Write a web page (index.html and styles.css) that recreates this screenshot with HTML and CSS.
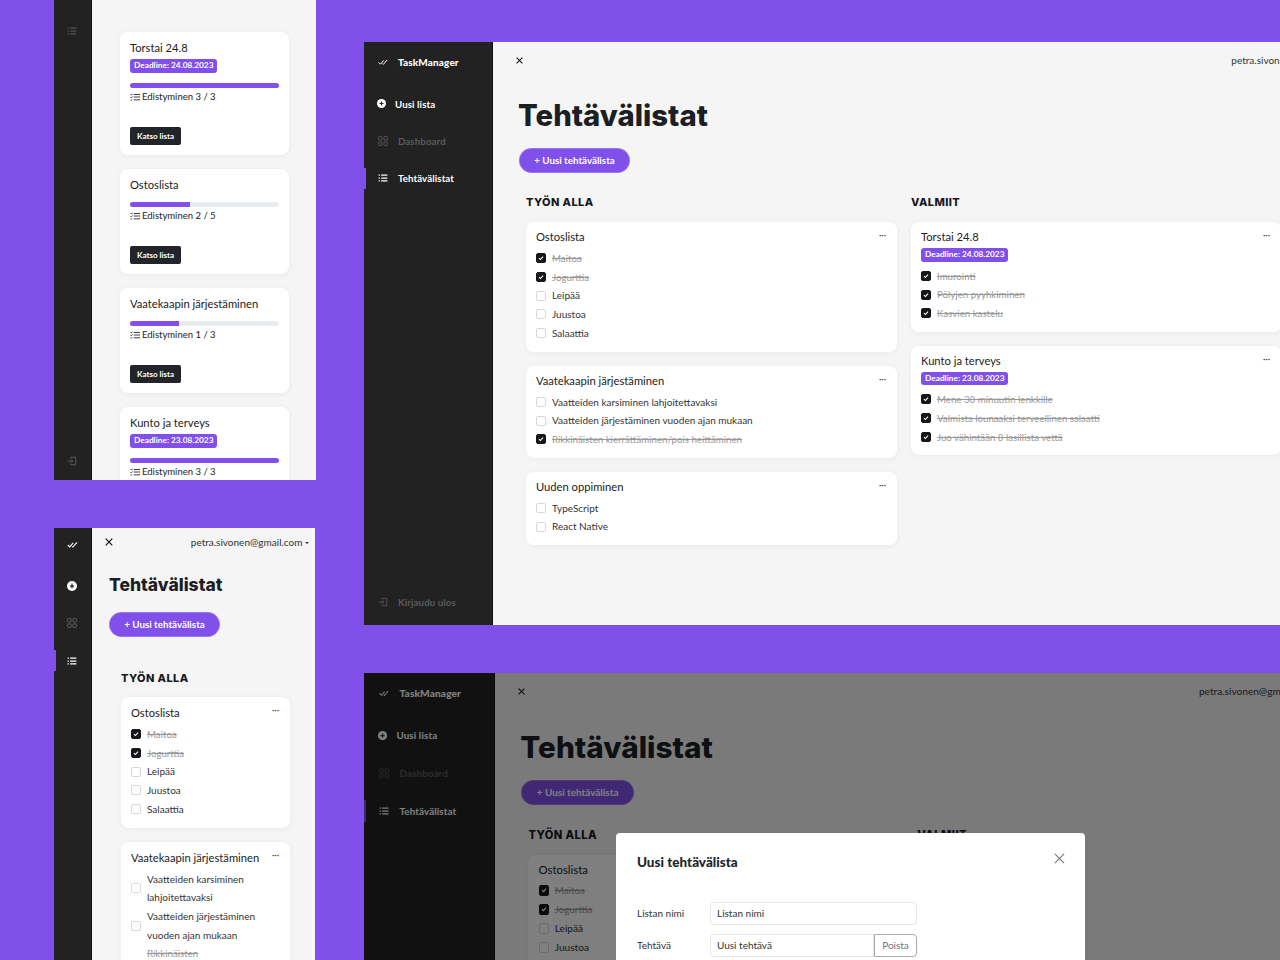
FILE: index.html
```html
<!DOCTYPE html>
<html lang="en">
<head>
    <meta charset="UTF-8">
    <title>TaskManager</title>
    <link rel="stylesheet" href="styles.css">
</head>
<body>
    <svg class="icon-defs" width="0" height="0">
        <symbol id="i-check" viewBox="0 0 16 16"><path d="M1 8.5l3 3 5-6M7.5 11l1 .8 6-7" fill="none" stroke="currentColor" stroke-width="1.6"/></symbol>
        <symbol id="i-plus" viewBox="0 0 16 16"><circle cx="8" cy="8" r="8" fill="currentColor"/><path d="M8 4.5v7M4.5 8h7" stroke="#222" stroke-width="2"/></symbol>
        <symbol id="i-grid" viewBox="0 0 16 16"><g fill="none" stroke="currentColor" stroke-width="1.4"><rect x="1" y="1" width="5.5" height="5.5" rx="1"/><rect x="9.5" y="1" width="5.5" height="5.5" rx="1"/><rect x="1" y="9.5" width="5.5" height="5.5" rx="1"/><rect x="9.5" y="9.5" width="5.5" height="5.5" rx="1"/></g></symbol>
        <symbol id="i-list" viewBox="0 0 16 16"><path d="M5 3.5h10M5 8h10M5 12.5h10" stroke="currentColor" stroke-width="2"/><path d="M1 3.5h2M1 8h2M1 12.5h2" stroke="currentColor" stroke-width="2"/></symbol>
        <symbol id="i-logout" viewBox="0 0 16 16"><path d="M6 4V2h8v12H6v-2M1 8h8M6.5 5.5L9 8l-2.5 2.500" fill="none" stroke="currentColor" stroke-width="1.3"/></symbol>
        <symbol id="i-tasks" viewBox="0 0 16 12"><path d="M1 2l1 1 2-2.3M1 6.5l1 1 2-2.3M1 10.800h2.500M6 2h10M6 6h10M6 10.500h10" fill="none" stroke="currentColor" stroke-width="1.4"/></symbol>
        <symbol id="i-box" viewBox="0 0 11 11"><path d="M2.700 5.600l2 2 3.600-4" fill="none" stroke="#fff" stroke-width="1.5"/></symbol>
        <symbol id="i-close" viewBox="0 0 8 8"><path d="M.7 .7l6.600 6.600M7.300 .7L.7 7.300" stroke="currentColor" stroke-width="1.2"/></symbol>
    </svg>

    <!-- mobile, progress cards -->
    <section class="window win-mobile-a">
        <nav class="rail">
            <svg class="rail-icon rail-list"><use href="#i-list"/></svg>
            <svg class="rail-icon rail-out"><use href="#i-logout"/></svg>
        </nav>
        <div class="stack">
            <div class="card summary">
                <h4>Torstai 24.8</h4>
                <span class="badge">Deadline: 24.08.2023</span>
                <div class="bar"><div class="bar-fill" style="width:100%"></div></div>
                <p class="progress-text"><svg><use href="#i-tasks"/></svg>Edistyminen 3 / 3</p>
                <a class="btn-dark">Katso lista</a>
            </div>
            <div class="card summary">
                <h4>Ostoslista</h4>
                <div class="bar"><div class="bar-fill" style="width:40%"></div></div>
                <p class="progress-text"><svg><use href="#i-tasks"/></svg>Edistyminen 2 / 5</p>
                <a class="btn-dark">Katso lista</a>
            </div>
            <div class="card summary">
                <h4>Vaatekaapin järjestäminen</h4>
                <div class="bar"><div class="bar-fill" style="width:33%"></div></div>
                <p class="progress-text"><svg><use href="#i-tasks"/></svg>Edistyminen 1 / 3</p>
                <a class="btn-dark">Katso lista</a>
            </div>
            <div class="card summary">
                <h4>Kunto ja terveys</h4>
                <span class="badge">Deadline: 23.08.2023</span>
                <div class="bar"><div class="bar-fill" style="width:100%"></div></div>
                <p class="progress-text"><svg><use href="#i-tasks"/></svg>Edistyminen 3 / 3</p>
            </div>
        </div>
    </section>

    <!-- desktop -->
    <section class="window win-desktop">
        <nav class="sidebar">
            <div class="brand"><svg><use href="#i-check"/></svg>TaskManager</div>
            <a class="side-link new"><svg><use href="#i-plus"/></svg>Uusi lista</a>
            <a class="side-link muted"><svg><use href="#i-grid"/></svg>Dashboard</a>
            <a class="side-link active"><svg><use href="#i-list"/></svg>Tehtävälistat</a>
            <a class="side-link muted logout"><svg><use href="#i-logout"/></svg>Kirjaudu ulos</a>
        </nav>
        <main class="content">
            <div class="topbar"><svg class="close"><use href="#i-close"/></svg><span class="user">petra.sivonen@gmail.com</span></div>
            <h1>Tehtävälistat</h1>
            <a class="btn-new">+ Uusi tehtävälista</a>
            <div class="columns">
                <div class="column">
                    <h3>TYÖN ALLA</h3>
                    <div class="card todo">
                        <span class="dots">•••</span>
                        <h4>Ostoslista</h4>
                        <ul>
                            <li class="done"><i class="box"><svg><use href="#i-box"/></svg></i>Maitoa</li>
                            <li class="done"><i class="box"><svg><use href="#i-box"/></svg></i>Jogurttia</li>
                            <li><i class="box"></i>Leipää</li>
                            <li><i class="box"></i>Juustoa</li>
                            <li><i class="box"></i>Salaattia</li>
                        </ul>
                    </div>
                    <div class="card todo">
                        <span class="dots">•••</span>
                        <h4>Vaatekaapin järjestäminen</h4>
                        <ul>
                            <li><i class="box"></i>Vaatteiden karsiminen lahjoitettavaksi</li>
                            <li><i class="box"></i>Vaatteiden järjestäminen vuoden ajan mukaan</li>
                            <li class="done"><i class="box"><svg><use href="#i-box"/></svg></i>Rikkinäisten kierrättäminen/pois heittäminen</li>
                        </ul>
                    </div>
                    <div class="card todo">
                        <span class="dots">•••</span>
                        <h4>Uuden oppiminen</h4>
                        <ul>
                            <li><i class="box"></i>TypeScript</li>
                            <li><i class="box"></i>React Native</li>
                        </ul>
                    </div>
                </div>
                <div class="column">
                    <h3>VALMIIT</h3>
                    <div class="card todo">
                        <span class="dots">•••</span>
                        <h4>Torstai 24.8</h4>
                        <span class="badge">Deadline: 24.08.2023</span>
                        <ul>
                            <li class="done"><i class="box"><svg><use href="#i-box"/></svg></i>Imurointi</li>
                            <li class="done"><i class="box"><svg><use href="#i-box"/></svg></i>Pölyjen pyyhkiminen</li>
                            <li class="done"><i class="box"><svg><use href="#i-box"/></svg></i>Kasvien kastelu</li>
                        </ul>
                    </div>
                    <div class="card todo">
                        <span class="dots">•••</span>
                        <h4>Kunto ja terveys</h4>
                        <span class="badge">Deadline: 23.08.2023</span>
                        <ul>
                            <li class="done"><i class="box"><svg><use href="#i-box"/></svg></i>Mene 30 minuutin lenkkille</li>
                            <li class="done"><i class="box"><svg><use href="#i-box"/></svg></i>Valmista lounaaksi terveellinen salaatti</li>
                            <li class="done"><i class="box"><svg><use href="#i-box"/></svg></i>Juo vähintään 8 lasillista vettä</li>
                        </ul>
                    </div>
                </div>
            </div>
        </main>
    </section>

    <!-- mobile, checklists -->
    <section class="window win-mobile-b">
        <nav class="rail">
            <svg class="rail-icon rail-brand"><use href="#i-check"/></svg>
            <svg class="rail-icon rail-plus"><use href="#i-plus"/></svg>
            <svg class="rail-icon rail-grid"><use href="#i-grid"/></svg>
            <svg class="rail-icon rail-active"><use href="#i-list"/></svg>
        </nav>
        <main class="content">
            <div class="topbar"><svg class="close"><use href="#i-close"/></svg><span class="user">petra.sivonen@gmail.com <b class="caret"></b></span></div>
            <h1>Tehtävälistat</h1>
            <a class="btn-new">+ Uusi tehtävälista</a>
            <div class="column">
                <h3>TYÖN ALLA</h3>
                <div class="card todo">
                    <span class="dots">•••</span>
                    <h4>Ostoslista</h4>
                    <ul>
                        <li class="done"><i class="box"><svg><use href="#i-box"/></svg></i>Maitoa</li>
                        <li class="done"><i class="box"><svg><use href="#i-box"/></svg></i>Jogurttia</li>
                        <li><i class="box"></i>Leipää</li>
                        <li><i class="box"></i>Juustoa</li>
                        <li><i class="box"></i>Salaattia</li>
                    </ul>
                </div>
                <div class="card todo">
                    <span class="dots">•••</span>
                    <h4>Vaatekaapin järjestäminen</h4>
                    <ul>
                        <li><i class="box"></i>Vaatteiden karsiminen lahjoitettavaksi</li>
                        <li><i class="box"></i>Vaatteiden järjestäminen vuoden ajan mukaan</li>
                        <li class="done"><i class="box"><svg><use href="#i-box"/></svg></i><span>Rikkinäisten<br>kierrättäminen/pois heittäminen</span></li>
                    </ul>
                </div>
            </div>
        </main>
    </section>

    <!-- desktop with modal open -->
    <section class="window win-modal">
        <div class="scaled">
            <nav class="sidebar">
                <div class="brand"><svg><use href="#i-check"/></svg>TaskManager</div>
                <a class="side-link new"><svg><use href="#i-plus"/></svg>Uusi lista</a>
                <a class="side-link muted"><svg><use href="#i-grid"/></svg>Dashboard</a>
                <a class="side-link active"><svg><use href="#i-list"/></svg>Tehtävälistat</a>
            </nav>
            <main class="content">
                <div class="topbar"><svg class="close"><use href="#i-close"/></svg><span class="user">petra.sivonen@gmail.com</span></div>
                <h1>Tehtävälistat</h1>
                <a class="btn-new">+ Uusi tehtävälista</a>
                <div class="columns">
                    <div class="column">
                        <h3>TYÖN ALLA</h3>
                        <div class="card todo">
                            <h4>Ostoslista</h4>
                            <ul>
                                <li class="done"><i class="box"><svg><use href="#i-box"/></svg></i>Maitoa</li>
                                <li class="done"><i class="box"><svg><use href="#i-box"/></svg></i>Jogurttia</li>
                                <li><i class="box"></i>Leipää</li>
                                <li><i class="box"></i>Juustoa</li>
                            </ul>
                        </div>
                    </div>
                    <div class="column">
                        <h3>VALMIIT</h3>
                    </div>
                </div>
            </main>
        </div>
        <div class="backdrop"></div>
        <div class="modal">
            <div class="modal-head"><h5>Uusi tehtävälista</h5><svg class="modal-x" viewBox="0 0 12 12"><path d="M1 1l10 10M11 1L1 11" stroke="currentColor" stroke-width="1.2"/></svg></div>
            <div class="field"><label>Listan nimi</label><div class="input">Listan nimi</div></div>
            <div class="field"><label>Tehtävä</label><div class="input-group"><div class="input">Uusi tehtävä</div><span class="btn-outline">Poista</span></div></div>
        </div>
    </section>
</body>
</html>
```

FILE: styles.css
```css
* {
    box-sizing: border-box;
}
html, body {
    margin: 0;
    height: 960px;
    overflow: hidden;
}
body {
    position: relative;
    background-color: #8150ea;
    font-family: "Lato", "Liberation Sans", sans-serif;
    color: #212529;
}
.icon-defs {
    position: absolute;
}
h1, h3, h4, h5, p, ul {
    margin: 0;
    padding: 0;
}
ul {
    list-style: none;
}

/* windows sit on a free canvas */
.window {
    position: absolute;
    display: flex;
    overflow: hidden;
    background-color: #f5f5f5;
}
.win-mobile-a {
    left: 54px;
    top: 0;
    width: 262px;
    height: 480px;
}
.win-desktop {
    left: 364px;
    top: 42px;
    width: 916px;
    height: 583px;
}
.win-mobile-b {
    left: 54px;
    top: 528px;
    width: 261px;
    height: 432px;
}
.win-modal {
    left: 364px;
    top: 673px;
    width: 916px;
    height: 287px;
}

/* narrow rail */
.rail {
    position: relative;
    flex: 0 0 38px;
    background-color: #222;
    border-right: 1px solid #111;
    color: #fff;
}
.rail-icon {
    position: absolute;
    left: 13px;
    width: 10px;
    height: 10px;
}
.rail-list { top: 26px; color: #555; }
.rail-out { top: 456px; color: #666; }
.rail-brand { top: 11px; width: 11px; height: 11px; }
.rail-plus { top: 53px; }
.rail-grid { top: 90px; color: #666; }
.rail-active { top: 128px; }
.win-mobile-b .rail::before {
    content: "";
    position: absolute;
    left: 0;
    top: 122px;
    width: 2px;
    height: 21px;
    background-color: #8150ea;
}

/* sidebar */
.sidebar {
    position: relative;
    flex: 0 0 129px;
    height: 583px;
    background-color: #222;
    border-right: 1px solid #111;
    color: #fff;
    font-size: 9.7px;
    font-weight: 700;
}
.brand {
    display: flex;
    align-items: center;
    gap: 10px;
    padding: 14px 0 0 14px;
    margin-bottom: 17px;
    font-size: 10px;
    font-weight: 900;
    letter-spacing: .1px;
}
.brand svg {
    width: 10px;
    height: 10px;
}
.side-link {
    position: relative;
    display: flex;
    align-items: center;
    height: 37.3px;
    padding-left: 14px;
    gap: 10px;
    letter-spacing: .1px;
}
.side-link svg {
    width: 10px;
    height: 10px;
}
.side-link.new {
    gap: 9px;
    padding-left: 13px;
}
.side-link.new svg {
    width: 9px;
    height: 9px;
}
.side-link.muted {
    color: #5b5b5b;
}
.side-link.active::before {
    content: "";
    position: absolute;
    left: 0;
    top: 8px;
    width: 2px;
    height: 21px;
    background-color: #8150ea;
}
.side-link.logout {
    position: absolute;
    left: 0;
    bottom: 4px;
}

/* main area */
.content {
    flex: 1;
    min-width: 0;
    padding: 0 0 0 26px;
}
.topbar {
    display: flex;
    justify-content: space-between;
    align-items: center;
    height: 36px;
    font-size: 10px;
}
.close {
    width: 7px;
    height: 7px;
    margin-left: -3px;
    color: #111;
}
.user {
    white-space: nowrap;
    transform: translateX(63px);
    color: #333;
}
h1 {
    margin: 20px 0 0 -1px;
    font-family: "Inter", sans-serif;
    font-size: 29.3px;
    font-weight: 800;
    line-height: 36px;
    color: #1b1f24;
}
.btn-new {
    display: inline-block;
    width: 111px;
    height: 25px;
    margin-top: 14px;
    border-radius: 13px;
    background-color: #8150ea;
    border: 1px solid #fff3;
    color: #fff;
    font-size: 9.8px;
    font-weight: 700;
    line-height: 23px;
    text-align: center;
}
.columns {
    display: grid;
    grid-template-columns: 371px 370px;
    column-gap: 14px;
    margin: 21px 0 0 7px;
}
h3 {
    font-family: "Inter", sans-serif;
    font-size: 11px;
    font-weight: 800;
    letter-spacing: .4px;
    line-height: 16px;
    margin-bottom: 12px;
    color: #16191d;
}

/* cards */
.card {
    position: relative;
    background-color: #fff;
    border-radius: 8px;
    box-shadow: 0 1px 6px rgba(0, 0, 0, .05);
}
.todo {
    padding: 8px 10px 9px;
    margin-bottom: 14px;
}
.card h4 {
    font-size: 11.2px;
    font-weight: 400;
    line-height: 14px;
    color: #222;
}
.dots {
    position: absolute;
    right: 11px;
    top: 10px;
    font-size: 4px;
    line-height: 8px;
    color: #444;
}
.badge {
    display: block;
    width: fit-content;
    height: 13.5px;
    margin-top: 4px;
    padding: 0 4px;
    border-radius: 3px;
    background-color: #8150ea;
    color: #fff;
    font-size: 8.3px;
    font-weight: 700;
    line-height: 13.5px;
}
.todo ul {
    margin-top: 5px;
}
.todo li {
    display: flex;
    align-items: center;
    min-height: 18.7px;
    font-size: 10px;
    line-height: 18.7px;
    color: #333;
}
.todo li.done {
    color: #999;
    font-size: 9.7px;
    text-decoration: line-through;
}
.box {
    flex: 0 0 10px;
    width: 10px;
    height: 10px;
    margin-right: 6px;
    border: 1px solid #d6d9dc;
    border-radius: 2px;
    background-color: #fff;
}
.done .box {
    background-color: #15171a;
    border-color: #15171a;
}
.box svg {
    display: block;
    width: 8px;
    height: 8px;
}

/* progress cards */
.stack {
    display: flex;
    flex-direction: column;
    gap: 14px;
    margin: 32px 0 0 28px;
    width: 169px;
    flex-shrink: 0;
}
.summary {
    padding: 9px 10px 10px;
    flex-shrink: 0;
}
.badge + .bar {
    margin-top: 10.5px;
}
.bar {
    height: 5px;
    margin-top: 10px;
    border-radius: 3px;
    background-color: #e9ecef;
    overflow: hidden;
}
.bar-fill {
    height: 100%;
    background-color: #8150ea;
}
.progress-text {
    display: flex;
    align-items: center;
    gap: 2px;
    margin-top: 2px;
    font-size: 9.5px;
    line-height: 14px;
    color: #222;
}
.progress-text svg {
    width: 10px;
    height: 8px;
}
.btn-dark {
    display: block;
    width: 51px;
    height: 18px;
    margin-top: 23px;
    border-radius: 2px;
    background-color: #212529;
    color: #fff;
    font-size: 8px;
    font-weight: 700;
    line-height: 18px;
    text-align: center;
}

/* narrow main */
.win-mobile-b .content {
    padding-left: 17px;
    padding-right: 0;
}
.win-mobile-b .topbar {
    height: 28px;
    padding-right: 6px;
}
.win-mobile-b .close {
    width: 8px;
    height: 8px;
    margin-left: -4px;
}
.win-mobile-b .user {
    transform: none;
}
.caret {
    display: inline-block;
    border: 2px solid transparent;
    border-top-color: #333;
    border-bottom: 0;
    vertical-align: 2px;
}
.win-mobile-b h1 {
    margin: 15px 0 0;
    font-size: 17.5px;
    line-height: 28px;
}
.win-mobile-b .btn-new {
    margin-top: 13px;
}
.win-mobile-b .column {
    width: 169px;
    margin: 33px 0 0 12px;
}
.win-mobile-b h3 {
    margin-bottom: 11px;
}
.win-mobile-b .todo {
    padding-top: 9px;
}

/* dimmed window */
.scaled {
    display: flex;
    width: 902px;
    height: 283px;
    zoom: 1.015;
}
.scaled .user {
    transform: translateX(32px);
}
.scaled .brand {
    padding-left: 15px;
}
.scaled .side-link {
    padding-left: 15px;
}
.scaled .side-link.new {
    padding-left: 14px;
}
.scaled h1 {
    margin-top: 19px;
}
.scaled .columns {
    column-gap: 12px;
    margin-top: 22px;
}
.scaled h3 {
    margin-bottom: 11px;
}
.scaled .todo ul {
    margin-top: 4px;
}
.backdrop {
    position: absolute;
    inset: 0;
    background-color: rgba(0, 0, 0, .5);
}
.modal {
    position: absolute;
    left: 252px;
    top: 160px;
    width: 469px;
    height: 127px;
    padding: 20px 21px;
    background-color: #fff;
    border-radius: 4px 4px 0 0;
}
.modal-head {
    display: flex;
    justify-content: space-between;
    height: 18px;
    margin-bottom: 31px;
}
.modal-head h5 {
    margin: 0;
    font-size: 13.5px;
    font-weight: 900;
    line-height: 18px;
    color: #212529;
}
.modal-x {
    width: 11px;
    height: 11px;
    margin: 0 -1px 0 0;
    color: #777;
}
.field {
    display: flex;
    align-items: center;
    margin-bottom: 9px;
    font-size: 10px;
    color: #333;
}
.field label {
    width: 73px;
    margin-top: -2px;
}
.input {
    width: 207px;
    height: 23px;
    padding-left: 6px;
    line-height: 21px;
    border: 1px solid #e3e6ea;
    border-radius: 4px;
}
.input-group {
    display: flex;
    width: 207px;
}
.input-group .input {
    width: 164px;
    border-radius: 4px 0 0 4px;
}
.btn-outline {
    flex: 1;
    height: 23px;
    line-height: 20px;
    text-align: center;
    color: #6c757d;
    border: 1.5px solid #aaa;
    border-radius: 0 4px 4px 0;
}
```
